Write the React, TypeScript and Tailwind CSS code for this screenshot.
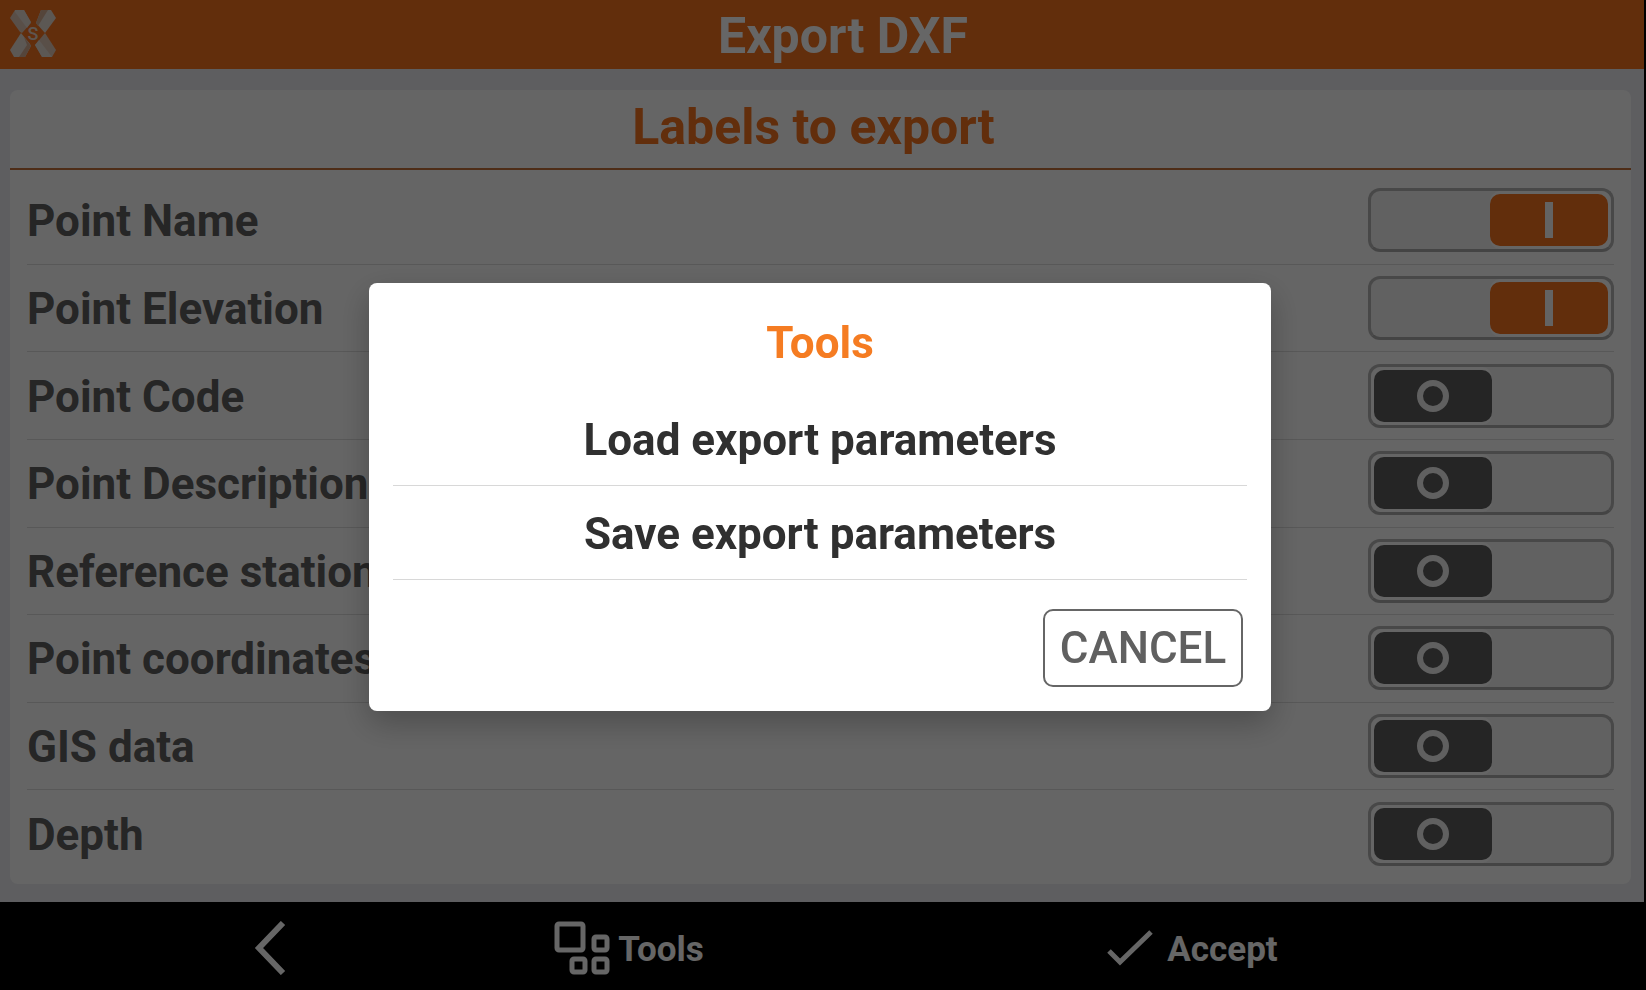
import { useState } from 'react'

const INITIAL_LABELS = [
  { id: 'name', label: 'Point Name', on: true },
  { id: 'elevation', label: 'Point Elevation', on: true },
  { id: 'code', label: 'Point Code', on: false },
  { id: 'description', label: 'Point Description', on: false },
  { id: 'reference', label: 'Reference station', on: false },
  { id: 'coordinates', label: 'Point coordinates', on: false },
  { id: 'gis', label: 'GIS data', on: false },
  { id: 'depth', label: 'Depth', on: false },
]

const TOOLS = ['Load export parameters', 'Save export parameters']

function Logo() {
  return (
    <svg viewBox="0 0 46 48" className="w-[46px] h-12 shrink-0" aria-hidden="true">
      <path d="M5 0H14L20 11L21 13L12 23L10 22L0 8Z" fill="#dfc6b5" />
      <path d="M5 0H14L21 12L17 18L5 2Z" fill="#e6dbd3" />
      <path d="M11 23L20 34L21 36L15 47H4L0 40Z" fill="#e6dbd3" />
      <path d="M14 27L21 36L15 47H9L17 35Z" fill="#d5ad92" />
      <path d="M31 0H41L46 8L35 23L26 13Z" fill="#e6dbd3" />
      <path d="M31 0H38L28 16L26 13Z" fill="#d5ad92" />
      <path d="M35 23L46 40L42 47H32L25 35Z" fill="#dfc6b5" />
      <path d="M29 30L42 47H32L25 35Z" fill="#e6dbd3" />
      <circle cx="23" cy="24" r="8" fill="#f57320" />
      <text x="23" y="30" textAnchor="middle" fontSize="18" fontWeight="500" fill="#ead6c8">S</text>
    </svg>
  )
}

interface ToggleProps {
  id: string
  checked: boolean
  onChange: () => void
}

function Toggle({ id, checked, onChange }: ToggleProps) {
  return (
    <div className={`relative flex w-[246px] h-16 shrink-0 rounded-xl border-[3px] border-[#b4b4b4] border-b-[#aaaaaa] bg-[#f2f2f2] ${checked ? 'justify-end' : 'justify-start'}`}>
      <div className={`w-[121px] rounded-[10px] bg-[#fdfdfd] py-[3px] ${checked ? 'pr-[3px]' : 'pl-[3px]'}`}>
        <div className={`flex h-full items-center justify-center rounded-[10px] ${checked ? 'bg-[#f57320]' : 'bg-[#5e5e5e]'}`}>
          {checked ? (
            <span className="w-2 h-9 bg-[#f8f8f8]" />
          ) : (
            <span className="w-8 h-8 rounded-full border-[6px] border-[#f0f0f0]" />
          )}
        </div>
      </div>
      <input
        id={id}
        type="checkbox"
        checked={checked}
        onChange={onChange}
        className="absolute inset-0 w-full h-full opacity-0 cursor-pointer"
      />
    </div>
  )
}

export default function App() {
  const [labels, setLabels] = useState(INITIAL_LABELS)
  const [toolsOpen, setToolsOpen] = useState(true)

  const toggle = (id: string) =>
    setLabels(prev => prev.map(l => (l.id === id ? { ...l, on: !l.on } : l)))

  return (
    <div className="min-h-screen flex flex-col bg-[#ebebf0] font-['Roboto',sans-serif] font-bold border-r-2 border-black">
      <header className="flex items-center h-[69px] pl-[10px] pr-[14px] pb-[2px] bg-[#f57320]">
        <Logo />
        <h1 className="flex-1 pt-1 text-center text-[50px] leading-[56px] text-white">Export DXF</h1>
      </header>

      <main className="flex-1 flex flex-col pt-[21px] pb-[18px] pl-[10px] pr-[13px]">
        <section className="flex-1 flex flex-col rounded-lg bg-[#fdfdfd]">
          <h2 className="pt-[9px] pb-[13px] pr-[14px] border-b-2 border-[#c2703a] text-center text-[50px] leading-[56px] text-[#f57320]">
            Labels to export
          </h2>
          <ul className="flex-1 grid auto-rows-fr pt-[7px] pb-[6px] px-[17px]">
            {labels.map(l => (
              <li key={l.id} className="flex items-center justify-between border-b border-[#dcdcdc] last:border-transparent">
                <label htmlFor={l.id} className="flex-1 pt-[2px] text-[44px] leading-[50px] text-[#5f5f5f]">
                  {l.label}
                </label>
                <Toggle id={l.id} checked={l.on} onChange={() => toggle(l.id)} />
              </li>
            ))}
          </ul>
        </section>
      </main>

      {/* Bottom bar */}
      <nav className="grid grid-cols-[360fr_358fr_769fr] h-[88px] pl-[90px] pr-[67px] pt-1 bg-black text-white text-[35px]">
        <button type="button" aria-label="Back" className="flex items-center justify-center">
          <svg viewBox="0 0 32 54" className="w-8 h-[54px]" fill="none" stroke="currentColor" strokeWidth="6">
            <path d="M29 2L5 27L29 52" />
          </svg>
        </button>
        <button type="button" onClick={() => setToolsOpen(true)} className="flex items-center justify-center gap-2">
          <svg viewBox="0 0 56 54" className="w-14 h-[54px]" fill="none" stroke="currentColor" strokeWidth="5">
            <rect x="3" y="3" width="26" height="26" rx="2" />
            <rect x="40" y="16" width="13" height="13" rx="2" />
            <rect x="18" y="38" width="13" height="13" rx="2" />
            <rect x="40" y="38" width="13" height="13" rx="2" />
          </svg>
          <span className="pt-1">Tools</span>
        </button>
        <button type="button" className="flex items-center justify-center gap-[14px]">
          <svg viewBox="0 0 46 36" className="w-[46px] h-9" fill="none" stroke="currentColor" strokeWidth="5">
            <path d="M2 21L13 32L44 2" />
          </svg>
          <span className="pt-1">Accept</span>
        </button>
      </nav>

      {/* Tools dialog */}
      {toolsOpen && (
        <div className="fixed inset-0 flex items-center justify-center pt-1 pr-[6px] bg-black/60">
          <div role="dialog" aria-modal="true" aria-labelledby="tools-title" className="w-[55%] rounded-lg bg-white px-6 pt-[38px] pb-6 shadow-[0_12px_32px_rgba(0,0,0,0.25)]">
            <h2 id="tools-title" className="mb-[27px] text-center text-[44px] leading-[44px] text-[#f57c22]">Tools</h2>
            {TOOLS.map(tool => (
              <button
                key={tool}
                type="button"
                className="block w-full h-[94px] pt-[2px] border-b border-[#d8d8d8] text-center text-[44px] leading-[50px] text-[#303030]"
              >
                {tool}
              </button>
            ))}
            <div className="flex justify-end mt-[29px] pr-1">
              <button
                type="button"
                onClick={() => setToolsOpen(false)}
                className="w-[200px] h-[78px] rounded-[10px] border-2 border-[#666666] text-[44px] font-medium text-[#606060]"
              >
                CANCEL
              </button>
            </div>
          </div>
        </div>
      )}
    </div>
  )
}
